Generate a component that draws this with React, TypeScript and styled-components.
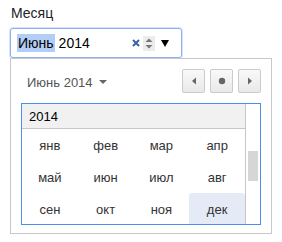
import React from "react";
import styled, { createGlobalStyle } from "styled-components";

const months = ["янв", "фев", "мар", "апр", "май", "июн", "июл", "авг", "сен", "окт", "ноя", "дек"];

const GlobalStyle = createGlobalStyle`
  body {
    margin: 0;
    background: #fff;
    font-family: "Liberation Sans", Arial, sans-serif;
  }
`;

function App() {
  return (
    <Page>
      <GlobalStyle />
      <Label>Месяц</Label>
      <Field>
        <Selected>Июнь</Selected>
        <Year>2014</Year>
        <Clear>
          <svg width="8" height="8" viewBox="0 0 8 8">
            <path d="M1 1 L7 7 M7 1 L1 7" stroke="#3a64a8" strokeWidth="2" />
          </svg>
        </Clear>
        <Spinner>
          <svg width="12" height="15" viewBox="0 0 12 15">
            <path d="M2.5 6 L6 2.5 L9.5 6 Z" fill="#777" />
            <path d="M2.5 9 L6 12.5 L9.5 9 Z" fill="#777" />
          </svg>
        </Spinner>
        <DropArrow>
          <svg width="8" height="7" viewBox="0 0 8 7">
            <path d="M0 0 L8 0 L4 7 Z" fill="#000" />
          </svg>
        </DropArrow>
      </Field>
      <Popup>
        <HeaderRow>
          <MonthSelect>
            Июнь 2014
            <svg width="8" height="4" viewBox="0 0 8 4">
              <path d="M0 0 L8 0 L4 4 Z" fill="#666" />
            </svg>
          </MonthSelect>
          <NavGroup>
            <NavButton>
              <svg width="6" height="8" viewBox="0 0 6 8">
                <path d="M5 0.5 L1 4 L5 7.5 Z" fill="#666" />
              </svg>
            </NavButton>
            <NavButton>
              <svg width="8" height="8" viewBox="0 0 8 8">
                <circle cx="4" cy="4" r="3.2" fill="#666" />
              </svg>
            </NavButton>
            <NavButton>
              <svg width="6" height="8" viewBox="0 0 6 8">
                <path d="M1 0.5 L5 4 L1 7.5 Z" fill="#666" />
              </svg>
            </NavButton>
          </NavGroup>
        </HeaderRow>
        <MonthList>
          <ListBody>
            <YearHeader>2014</YearHeader>
            <MonthGrid>
              {months.map((m) => (
                <MonthCell key={m} $active={m === "дек"}>
                  {m}
                </MonthCell>
              ))}
            </MonthGrid>
          </ListBody>
          <ScrollTrack>
            <ScrollThumb />
          </ScrollTrack>
        </MonthList>
      </Popup>
    </Page>
  );
}

export default App;

const Page = styled.div`
  padding: 5px 0 0 10px;
  width: 262px;
`;

const Label = styled.div`
  font-size: 14px;
  line-height: 17px;
  color: #222;
  padding-left: 1px;
  margin-bottom: 6px;
`;

const Field = styled.div`
  box-sizing: border-box;
  width: 172px;
  height: 30px;
  display: flex;
  align-items: center;
  padding-left: 6px;
  border: 1px solid #8fb2ee;
  border-radius: 3px;
  box-shadow: 0 0 0 1px rgba(140, 175, 240, 0.35);
  font-size: 14px;
  color: #000;
`;

const Selected = styled.span`
  background: #b2cdf6;
  padding: 2px 1px;
  line-height: 14px;
`;

const Year = styled.span`
  margin-left: 4px;
`;

const Clear = styled.span`
  margin-left: auto;
  display: flex;
  margin-right: 3px;
`;

const Spinner = styled.span`
  display: flex;
  align-items: center;
  justify-content: center;
  width: 12px;
  height: 15px;
  background: #ececec;
  margin-right: 6px;
`;

const DropArrow = styled.span`
  display: flex;
  margin-right: 12px;
  margin-top: 1px;
`;

const Popup = styled.div`
  box-sizing: border-box;
  width: 262px;
  height: 176px;
  border: 1px solid #c8c8c8;
  background: #fff;
  padding: 10px 10px 8px 10px;
`;

const HeaderRow = styled.div`
  display: flex;
  align-items: center;
  justify-content: space-between;
  height: 24px;
  margin-bottom: 10px;
`;

const MonthSelect = styled.div`
  display: flex;
  align-items: center;
  gap: 6px;
  padding-left: 6px;
  padding-top: 2px;
  font-size: 13px;
  color: #555;
`;

const NavGroup = styled.div`
  display: flex;
  gap: 5px;
`;

const NavButton = styled.div`
  box-sizing: border-box;
  width: 23px;
  height: 24px;
  display: flex;
  align-items: center;
  justify-content: center;
  border: 1px solid #cbcbcb;
  border-radius: 2px;
  background: linear-gradient(180deg, #f9f9f9 0%, #e9e9e9 100%);
`;

const MonthList = styled.div`
  box-sizing: border-box;
  width: 240px;
  height: 122px;
  border: 1px solid #4b8ef2;
  display: flex;
  overflow: hidden;
`;

const ListBody = styled.div`
  flex: 1;
  display: flex;
  flex-direction: column;
`;

const YearHeader = styled.div`
  height: 24px;
  border-bottom: 1px solid #c6c6c6;
  background: #f1f1f1;
  font-size: 13px;
  line-height: 25px;
  color: #000;
  padding-left: 7px;
`;

const MonthGrid = styled.div`
  display: grid;
  grid-template-columns: repeat(4, 1fr);
  grid-auto-rows: 32px;
`;

const MonthCell = styled.div<{ $active?: boolean }>`
  display: flex;
  align-items: center;
  justify-content: center;
  font-size: 13px;
  color: #333;
  background: ${(p) => (p.$active ? "#e4ebf7" : "transparent")};
  border-radius: ${(p) => (p.$active ? "3px 3px 0 0" : "0")};
`;

const ScrollTrack = styled.div`
  width: 15px;
  border-left: 1px solid #c6c6c6;
  padding: 47px 0 0 2px;
  box-sizing: border-box;
`;

const ScrollThumb = styled.div`
  width: 10px;
  height: 30px;
  background: #d6d6d6;
`;
